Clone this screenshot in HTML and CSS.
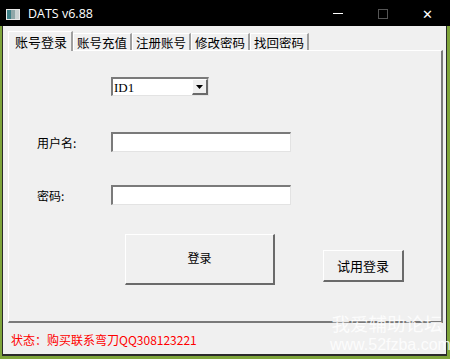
FILE: index.html
```html
<!DOCTYPE html>
<html>
<head>
  <title>DATS v6.88</title>
  <link rel="stylesheet" href="styles.css">
</head>
<body>
  <div class="window">
    <div class="titlebar">
      <svg class="app-icon" width="14" height="11" viewBox="0 0 14 11">
        <rect x="0" y="0" width="14" height="11" fill="#e8e8e8"/>
        <rect x="1" y="1" width="4" height="9" fill="#3c7f86"/>
        <rect x="5" y="1" width="4" height="9" fill="#8fa7a8"/>
        <rect x="9" y="1" width="4" height="9" fill="#c9d2d2"/>
      </svg>
      <span class="title">DATS v6.88</span>
      <div class="controls">
        <span class="ctl ctl-min"></span>
        <span class="ctl ctl-max"></span>
        <span class="ctl ctl-close">&#x2715;</span>
      </div>
    </div>

    <div class="client">
      <div class="tabs">
        <span class="tab active">账号登录</span>
        <span class="tab">账号充值</span>
        <span class="tab">注册账号</span>
        <span class="tab">修改密码</span>
        <span class="tab">找回密码</span>
      </div>

      <div class="panel">
        <div class="row-select">
          <div class="combo">
            <span class="combo-text">ID1</span>
            <span class="combo-btn">
              <svg width="7" height="4" viewBox="0 0 7 4"><path d="M0 0h7L3.5 4z" fill="#000"/></svg>
            </span>
          </div>
        </div>

        <div class="field row-user">
          <label for="user">用户名:</label>
          <input type="text" id="user" class="edit">
        </div>

        <div class="field row-pass">
          <label for="pass">密码:</label>
          <input type="password" id="pass" class="edit">
        </div>

        <div class="row-buttons">
          <button class="btn btn-login">登录</button>
          <button class="btn btn-trial">试用登录</button>
        </div>
      </div>

      <div class="status">状态：购买联系弯刀QQ308123221</div>
    </div>

    <div class="watermark">
      <div class="wm-big">我爱辅助论坛</div>
      <div class="wm-url">www.52fzba.com</div>
    </div>
  </div>
</body>
</html>
```

FILE: styles.css
```css
body {
  margin: 0;
  background: #7ea43a;
  font-family: "Noto Sans CJK SC", "Liberation Sans", sans-serif;
}

.window {
  position: relative;
  width: 450px;
  height: 359px;
  overflow: hidden;
}

.titlebar {
  height: 26px;
  background: #000;
  color: #fff;
  display: flex;
  align-items: center;
}

.app-icon {
  margin-left: 6px;
  margin-top: 2px;
}

.title {
  margin-left: 8px;
  font-family: "Open Sans", "Liberation Sans", sans-serif;
  font-size: 12.5px;
  margin-top: 1px;
}

.controls {
  margin-left: auto;
  display: flex;
  height: 26px;
}

.ctl {
  width: 45px;
  height: 26px;
  display: flex;
  align-items: center;
  justify-content: center;
  color: #fff;
}

.ctl-min::after {
  content: "";
  width: 10px;
  height: 1px;
  background: #fff;
  margin-top: 1px;
}

.ctl-max::after {
  content: "";
  width: 8px;
  height: 8px;
  border: 1px solid #555;
  margin-top: 1px;
}

.ctl-close {
  font-size: 13px;
  font-family: "DejaVu Sans", sans-serif;
  font-weight: 300;
  margin-top: 1px;
}

.client {
  margin: 0 3px 0 2px;
  height: 330px;
  background: #f0f0f0;
  border-left: 1px solid #2a2a2a;
  border-bottom: 2px solid #2a2a2a;
  border-right: 1px solid #2a2a2a;
  padding: 5px 0 0 5px;
  box-sizing: border-box;
}

.tabs {
  display: flex;
  align-items: flex-end;
  height: 19px;
  font-size: 12.5px;
}

.tab {
  height: 17px;
  line-height: 17px;
  padding: 0 3px 0 3px;
  border-top: 1px solid #fff;
  border-left: 1px solid #fff;
  border-right: 2px solid #a0a0a0;
  box-sizing: border-box;
  color: #000;
  white-space: nowrap;
}

.tab.active {
  height: 20px;
  line-height: 19px;
  padding: 0 4px 0 6px;
  position: relative;
  z-index: 1;
  background: #f0f0f0;
  margin-bottom: -1px;
  font-size: 13px;
}

.panel {
  width: 435px;
  height: 273px;
  box-sizing: border-box;
  border-top: 1px solid #fff;
  border-left: 1px solid #fff;
  border-right: 2px solid #7a7a7a;
  border-bottom: 2px solid #7a7a7a;
}

.row-select {
  padding: 26px 0 0 102px;
}

.combo {
  width: 98px;
  height: 19px;
  box-sizing: border-box;
  border-top: 2px solid #7a7a7a;
  border-left: 2px solid #7a7a7a;
  border-right: 1px solid #e3e3e3;
  border-bottom: 1px solid #e3e3e3;
  background: #fff;
  display: flex;
  align-items: center;
}

.combo-text {
  flex: 1;
  font-family: "Liberation Serif", serif;
  font-size: 13px;
  padding-left: 1px;
  line-height: 15px;
}

.combo-btn {
  width: 16px;
  height: 16px;
  box-sizing: border-box;
  background: #f0f0f0;
  border-top: 1px solid #fff;
  border-left: 1px solid #fff;
  border-right: 2px solid #6a6a6a;
  border-bottom: 2px solid #6a6a6a;
  display: flex;
  align-items: center;
  justify-content: center;
}

.field {
  display: flex;
  align-items: center;
  font-size: 12px;
}

.field label {
  width: 74px;
  padding-left: 28px;
}

.row-user {
  margin-top: 36px;
}

.row-pass {
  margin-top: 33px;
}

.edit {
  width: 180px;
  height: 20px;
  box-sizing: border-box;
  margin: 0;
  padding: 0;
  background: #fff;
  border-top: 2px solid #7a7a7a;
  border-left: 2px solid #7a7a7a;
  border-right: 1px solid #e3e3e3;
  border-bottom: 1px solid #e3e3e3;
  outline: none;
}

.row-buttons {
  display: flex;
  align-items: flex-start;
  margin-top: 29px;
  padding-left: 116px;
}

.btn {
  font-family: "Noto Sans CJK SC", sans-serif;
  font-size: 12px;
  background: #f0f0f0;
  color: #000;
  box-sizing: border-box;
  border-top: 1px solid #fff;
  border-left: 1px solid #fff;
  border-right: 2px solid #6a6a6a;
  border-bottom: 2px solid #6a6a6a;
  padding: 0;
}

.btn-login {
  width: 150px;
  height: 51px;
  padding-bottom: 4px;
}

.btn-trial {
  width: 81px;
  height: 32px;
  margin: 16px 0 0 48px;
  font-size: 13px;
}

.status {
  color: #ff0000;
  font-size: 12px;
  padding: 8px 0 0 3px;
}

.watermark {
  position: absolute;
  left: 330px;
  top: 311px;
  color: rgba(255, 255, 255, 0.85);
  text-align: center;
  width: 114px;
}

.wm-big {
  font-size: 18.5px;
  line-height: 24px;
}

.wm-url {
  font-family: "Liberation Sans", sans-serif;
  font-size: 16px;
  line-height: 20px;
}
```
